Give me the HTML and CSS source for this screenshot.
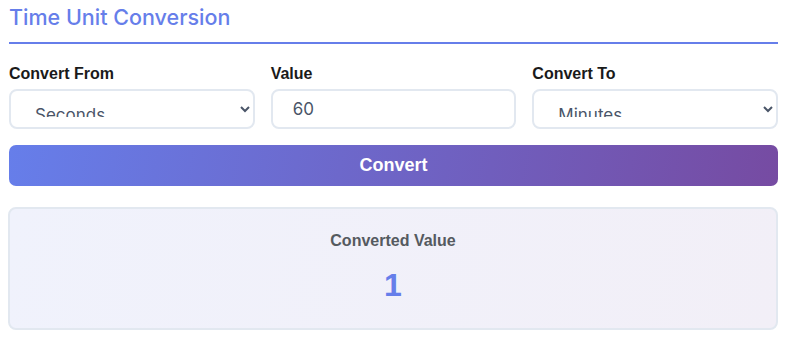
FILE: index.html
```html
<!DOCTYPE html>
<html lang="en">
<head>
<meta charset="utf-8">
<title>Time Unit Conversion</title>
<link rel="stylesheet" href="styles.css">
</head>
<body>
<div class="converter">
  <h2 class="title">Time Unit Conversion</h2>
  <div class="fields">
    <div class="field">
      <label class="label" for="from">Convert From</label>
      <select class="control select" id="from">
        <option>Seconds</option>
        <option>Minutes</option>
        <option>Hours</option>
      </select>
    </div>
    <div class="field">
      <label class="label" for="value">Value</label>
      <input class="control input" id="value" type="number" value="60">
    </div>
    <div class="field">
      <label class="label" for="to">Convert To</label>
      <select class="control select" id="to">
        <option>Seconds</option>
        <option selected>Minutes</option>
        <option>Hours</option>
      </select>
    </div>
  </div>
  <button class="convert-btn" type="button">Convert</button>
  <div class="result">
    <div class="result-label">Converted Value</div>
    <div class="result-value">1</div>
  </div>
</div>
</body>
</html>
```
FILE: styles.css
```css
* { box-sizing: border-box; }
html, body { margin: 0; padding: 0; background: #ffffff; }
body { font-family: "Liberation Sans", Arial, sans-serif; }

.converter {
  padding: 0 7px 0 9px;
  display: flex;
  flex-direction: column;
}

.title {
  margin: 0;
  padding: 5px 0 12px;
  font-family: "Inter", "Open Sans", sans-serif;
  font-weight: 500;
  font-size: 21.5px;
  line-height: 25px;
  color: #667eea;
  border-bottom: 2px solid #667eea;
  letter-spacing: 0;
}

.fields {
  margin-top: 21px;
  display: grid;
  grid-template-columns: 1fr 1fr 1fr;
  gap: 16px;
}

.field { display: flex; flex-direction: column; }

.label {
  font-size: 16px;
  font-weight: bold;
  line-height: 18px;
  color: #1a1a1a;
  margin-bottom: 6px;
}

.control {
  height: 40px;
  border: 2px solid #e2e8f0;
  border-radius: 8px;
  background: #ffffff;
  font-family: "Inter", "Liberation Sans", sans-serif;
  font-size: 17px;
  color: #4a5568;
  width: 100%;
  outline: none;
}

.select {
  padding: 13px 20px 10px 20px;
}

.input {
  padding: 0 20px;
}
.input::-webkit-outer-spin-button,
.input::-webkit-inner-spin-button { -webkit-appearance: none; margin: 0; }

.convert-btn {
  margin-top: 16px;
  height: 41px;
  border: none;
  border-radius: 7px;
  background: linear-gradient(100deg, #667eea 0%, #764ba2 100%);
  color: #ffffff;
  font-family: "Liberation Sans", Arial, sans-serif;
  font-size: 18px;
  font-weight: bold;
  cursor: pointer;
}

.result {
  margin-top: 21px;
  margin-left: -1px;
  height: 123px;
  border: 2px solid #e2e8f0;
  border-radius: 8px;
  background: linear-gradient(100deg, #f0f2fc 0%, #f2eff7 100%);
  display: flex;
  flex-direction: column;
  align-items: center;
  padding-top: 23px;
}

.result-label {
  font-size: 16px;
  font-weight: bold;
  color: #555a60;
  line-height: 18px;
}

.result-value {
  margin-top: 17px;
  font-size: 32px;
  font-weight: bold;
  color: #667eea;
  line-height: 36px;
}
```
